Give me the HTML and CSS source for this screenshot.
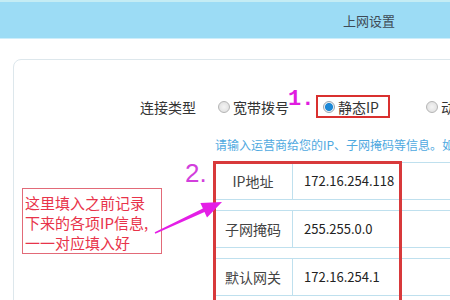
FILE: index.html
```html
<!DOCTYPE html>
<html lang="zh-CN">
<head>
    <meta charset="UTF-8">
    <meta name="viewport" content="width=device-width, initial-scale=1.0">
    <title>上网设置</title>
    <link rel="stylesheet" href="styles.css">
</head>
<body>
    <div class="topbar">
        <span class="tab">上网设置</span>
    </div>

    <div class="panel">
        <div class="form">
            <div class="label">连接类型</div>
            <div class="options">
                <label class="opt first"><span class="radio"></span>宽带拨号</label>
                <label class="opt picked"><span class="step one">1.</span><span class="radio on"></span>静态IP</label>
                <label class="opt"><span class="radio"></span>动态IP</label>
            </div>

            <div></div>
            <div class="hint">请输入运营商给您的IP、子网掩码等信息。如有疑问</div>

            <div></div>
            <div class="fields">
                <span class="step two">2.</span>
                <div class="row">
                    <div class="name">IP地址</div>
                    <div class="value">172.16.254.118</div>
                </div>
                <div class="row">
                    <div class="name">子网掩码</div>
                    <div class="value">255.255.0.0</div>
                </div>
                <div class="row">
                    <div class="name">默认网关</div>
                    <div class="value">172.16.254.1</div>
                </div>
            </div>
        </div>
    </div>

    <!-- 标注 -->
    <div class="notes">
        <div class="callout">这里填入之前记录<br>下来的各项IP信息,<br>一一对应填入好</div>
        <svg class="arrow" width="450" height="300" viewBox="0 0 450 300">
            <polygon points="154.7,232.3 202.9,208.4 200.4,202.9 222,202 207,217.5 204.5,212 155.3,233.7" fill="#e41ee6"/>
        </svg>
    </div>
</body>
</html>
```

FILE: styles.css
```css
body {
    margin: 0;
    width: 450px;
    height: 300px;
    overflow: hidden;
    position: relative;
    background-color: #fff;
    font-family: "Noto Sans CJK SC", "Liberation Sans", sans-serif;
    color: #333;
}

/* 顶部标题栏 */
.topbar {
    height: 36px;
    border-top: 2px solid #c4ecf4;
    border-bottom: 1px solid #cdeefb;
    background-color: #9cdcf5;
    display: flex;
    justify-content: flex-end;
    align-items: center;
    padding-right: 55px;
}

.tab {
    font-size: 13px;
    color: #3e4a55;
}

.panel {
    margin: 20px 0 0 13px;
    width: 500px;
    height: 400px;
    border: 1px solid #dde7ec;
    border-radius: 8px;
    padding-top: 36px;
}

.form {
    display: grid;
    grid-template-columns: 200px 1fr;
}

.label {
    font-size: 14px;
    line-height: 22px;
    text-align: right;
    padding-right: 18px;
    color: #333;
}

.options {
    display: flex;
    padding-left: 4px;
    white-space: nowrap;
}

.opt {
    display: inline-flex;
    align-items: center;
    font-size: 14px;
    line-height: 22px;
    color: #333;
    position: relative;
}

.opt.first {
    margin-right: 34px;
}

.opt.picked {
    margin-right: 47px;
}

.opt.picked::after {
    content: "";
    position: absolute;
    left: -7px;
    right: -11px;
    top: -1px;
    bottom: 0;
    border: 2px solid #d9302f;
}

.radio {
    width: 10px;
    height: 10px;
    border: 1px solid #b5b5b5;
    border-radius: 50%;
    background: radial-gradient(circle, #f4f4f4 0, #dcdcdc 100%);
    margin-right: 3px;
    flex-shrink: 0;
}

.radio.on {
    border-color: #9aa6b0;
    background: radial-gradient(circle, #1d88d6 0 3.6px, #e9eef2 4.4px);
}

.hint {
    margin-top: 17px;
    padding-left: 1px;
    font-size: 12px;
    line-height: 20px;
    color: #4fa9df;
    white-space: nowrap;
}

/* IP 信息表 */
.fields {
    margin-top: 7px;
    position: relative;
}

.fields::after {
    content: "";
    position: absolute;
    left: -1px;
    top: -1px;
    width: 189px;
    height: 170px;
    box-sizing: border-box;
    border: 3px solid #d8393b;
}

.row {
    display: flex;
    height: 36px;
    border-top: 1px solid #bfe0ee;
    border-bottom: 1px solid #bfe0ee;
    margin-bottom: 10px;
}

.name {
    width: 78px;
    border-right: 1px solid #bfe0ee;
    font-size: 14px;
    line-height: 36px;
    text-align: center;
    color: #444;
}

.value {
    padding-left: 11px;
    font-size: 13px;
    line-height: 36px;
    color: #222;
}

.step {
    position: absolute;
    color: #dd2ee0;
    z-index: 2;
}

.step.one {
    left: -35px;
    top: -7px;
    font-family: "Liberation Mono", monospace;
    font-size: 22px;
    font-weight: bold;
    line-height: 22px;
    color: #e01ce0;
}

.step.two {
    left: -29px;
    top: -2px;
    font-family: "Liberation Sans", sans-serif;
    font-size: 26px;
    line-height: 26px;
    color: #d23fdc;
}

/* 标注层 */
.notes {
    position: absolute;
    left: 0;
    top: 0;
    width: 450px;
    height: 300px;
    pointer-events: none;
}

.callout {
    position: absolute;
    left: 22px;
    top: 188px;
    width: 136px;
    height: 60px;
    padding: 4px 0 0 2px;
    border: 1px solid #e26a78;
    background-color: #fff;
    font-size: 15px;
    line-height: 20px;
    color: #e8334a;
    white-space: nowrap;
}

.arrow {
    position: absolute;
    left: 0;
    top: 0;
}
```
